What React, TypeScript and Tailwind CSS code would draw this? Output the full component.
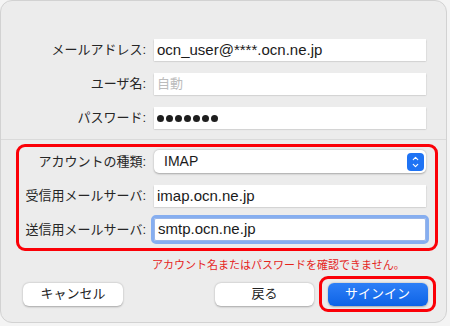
import { ChevronUp, ChevronDown } from "lucide-react";

const font = { fontFamily: '"Liberation Sans", "Noto Sans CJK JP", sans-serif' };

function Label({ children }: { children: string }) {
  return (
    <div className="w-[131px] shrink-0 text-right text-[13px] text-[#262626] pr-[4px]">
      {children}
    </div>
  );
}

function Field({ children, focused }: { children?: React.ReactNode; focused?: boolean }) {
  return (
    <div
      className={
        focused
          ? "ml-[4px] w-[272px] h-[23px] flex items-center pl-[3px] bg-white text-[15px] text-[#1a1a1a] rounded-[2px] outline outline-[3px] outline-[#86aef0] border border-[#9ab6e8]"
          : "ml-[4px] w-[272px] h-[22px] flex items-center pl-[3px] bg-white text-[15px] text-[#1a1a1a] shadow-[0_0.5px_1.5px_rgba(0,0,0,0.28)]"
      }
    >
      {children}
    </div>
  );
}

export default function App() {
  return (
    <div className="w-[450px] h-[326px] bg-[#f4f4f4]" style={font}>
      <div className="w-[447px] h-[323px] rounded-[12px] border border-[#d2d2d2] bg-[#ececec] pt-[38px] flex flex-col">
        {/* 基本情報 */}
        <div className="flex flex-col gap-[12px] pl-[18px]">
          <div className="flex items-center">
            <Label>メールアドレス:</Label>
            <Field>ocn_user@****.ocn.ne.jp</Field>
          </div>
          <div className="flex items-center">
            <Label>ユーザ名:</Label>
            <Field>
              <span className="text-[#bcbcbc] text-[13px]">自動</span>
            </Field>
          </div>
          <div className="flex items-center">
            <Label>パスワード:</Label>
            <Field>
              <div className="flex gap-[2px]">
                {Array.from({ length: 7 }).map((_, i) => (
                  <span key={i} className="w-[7px] h-[7px] rounded-full bg-[#1e1e1e]" />
                ))}
              </div>
            </Field>
          </div>
        </div>

        <div className="mt-[10px] h-px bg-[#dadada]" />

        {/* サーバ設定 */}
        <div className="ml-[15px] mt-[4px] w-[422px] h-[107px] border-[3px] border-[#fb0007] rounded-[9px] pt-[3px] flex flex-col">
          <div className="flex items-center">
            <Label>アカウントの種類:</Label>
            <div className="ml-[4px] w-[272px] h-[23px] flex items-center justify-between pl-[10px] pr-[2px] bg-white rounded-[5px] shadow-[0_0.5px_2px_rgba(0,0,0,0.3)] text-[14px] text-[#1a1a1a]">
              <span>IMAP</span>
              <span className="w-[17px] h-[18px] rounded-[4px] bg-[#1f73f4] flex flex-col items-center justify-center text-white">
                <ChevronUp size={9} strokeWidth={3} className="-mb-[1px]" />
                <ChevronDown size={9} strokeWidth={3} className="-mt-[1px]" />
              </span>
            </div>
          </div>
          <div className="flex items-center mt-[12px]">
            <Label>受信用メールサーバ:</Label>
            <Field>imap.ocn.ne.jp</Field>
          </div>
          <div className="flex items-center mt-[11px]">
            <Label>送信用メールサーバ:</Label>
            <Field focused>smtp.ocn.ne.jp</Field>
          </div>
        </div>

        <div className="mt-[4px] pl-[151px] text-[11px] text-[#e5241d] h-[20px] flex items-center">
          アカウント名またはパスワードを確認できません。
        </div>

        {/* ボタン */}
        <div className="mt-[1px] flex items-center pl-[22px]">
          <button className="w-[100px] h-[23px] rounded-[6px] bg-white text-[13px] text-[#222] shadow-[0_0.5px_2px_rgba(0,0,0,0.3)]">
            キャンセル
          </button>
          <button className="ml-[92px] w-[99px] h-[23px] rounded-[6px] bg-white text-[13px] text-[#222] shadow-[0_0.5px_2px_rgba(0,0,0,0.3)]">
            戻る
          </button>
          <div className="ml-[5px] w-[117px] h-[36px] border-[3px] border-[#fb0007] rounded-[9px] flex items-center justify-center">
            <button className="w-[100px] h-[23px] rounded-[6px] bg-gradient-to-b from-[#2d7ff7] to-[#0b63e6] text-[13px] text-white shadow-[0_0.5px_2px_rgba(0,0,0,0.3)]">
              サインイン
            </button>
          </div>
        </div>
      </div>
    </div>
  );
}
